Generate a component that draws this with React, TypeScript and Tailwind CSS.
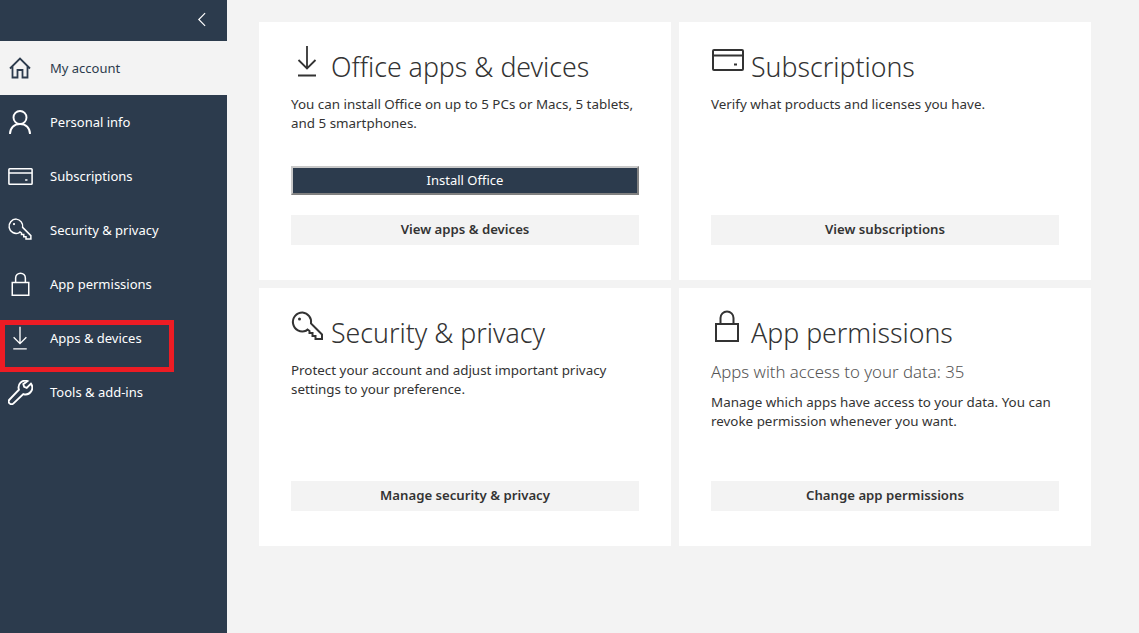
function DownloadIcon({ className }: { className?: string }) {
  return (
    <svg viewBox="0 0 20 32" fill="none" stroke="currentColor" strokeWidth="1.800" className={className}>
      <path d="M10 1v22M1.500 15l8.500 8.500 8.500-8.500M1 30.500h18" />
    </svg>
  );
}

function CardIcon({ className }: { className?: string }) {
  return (
    <svg viewBox="0 0 32 22" fill="none" stroke="currentColor" strokeWidth="2" className={className}>
      <rect x="1" y="1" width="30" height="20" rx="1" />
      <path d="M1 6.500h30M22 15.500h3" />
    </svg>
  );
}

function KeyIcon({ className }: { className?: string }) {
  return (
    <svg viewBox="0 0 32 32" fill="none" stroke="currentColor" strokeWidth="2" className={className}>
      <path d="M11 1.500a9.500 9.500 0 1 0 3.500 18.300l1.500-1.300 2 1.500v2h3v3h3v3h6.500v-4.500L19.500 12.500A9.500 9.500 0 0 0 11 1.500z" />
      <circle cx="8" cy="8" r="1.500" fill="currentColor" stroke="none" />
    </svg>
  );
}

function LockIcon({ className }: { className?: string }) {
  return (
    <svg viewBox="0 0 24 32" fill="none" stroke="currentColor" strokeWidth="2" className={className}>
      <rect x="1" y="14" width="22" height="17" />
      <path d="M5.500 14V8a6.500 6.500 0 0 1 13 0v6" />
    </svg>
  );
}

function HomeIcon({ className }: { className?: string }) {
  return (
    <svg viewBox="0 0 22 22" fill="none" stroke="currentColor" strokeWidth="1.800" className={className}>
      <path d="M1 11.500 11 1.500l10 10M3.500 9.500V20.500h5V13h5v7.500h5V9.500" />
    </svg>
  );
}

function PersonIcon({ className }: { className?: string }) {
  return (
    <svg viewBox="0 0 22 24" fill="none" stroke="currentColor" strokeWidth="1.900" className={className}>
      <circle cx="11" cy="7.500" r="6.500" />
      <path d="M1 24c0-6 4-10 10-10s10 4 10 10" />
    </svg>
  );
}

function WrenchIcon({ className }: { className?: string }) {
  return (
    <svg viewBox="0 0 24 24" fill="none" stroke="currentColor" strokeWidth="1.800" className={className}>
      <path d="M22 3.500 18 7.500l-2.500-1-.8-2.500 4-3a6.500 6.500 0 0 0-8.200 8.300L1.500 18.700a2.600 2.600 0 0 0 3.800 3.800l9.400-9a6.500 6.500 0 0 0 7.300-10z" />
    </svg>
  );
}

const navItems = [
  { label: "My account", icon: <HomeIcon className="h-[22px] w-[22px]" />, active: true },
  { label: "Personal info", icon: <PersonIcon className="h-[24px] w-[22px]" /> },
  { label: "Subscriptions", icon: <CardIcon className="h-[17px] w-[25px]" /> },
  { label: "Security & privacy", icon: <KeyIcon className="h-[24px] w-[26px]" /> },
  { label: "App permissions", icon: <LockIcon className="h-[24px] w-[19px]" /> },
  { label: "Apps & devices", icon: <DownloadIcon className="h-[24px] w-[16px]" /> },
  { label: "Tools & add-ins", icon: <WrenchIcon className="h-[25px] w-[25px]" /> },
];

function Sidebar() {
  return (
    <aside className="relative w-[227px] shrink-0 bg-[#2c3b4d] text-[13px] text-white">
      <div className="flex h-[41px] items-start justify-end pr-[21px] pt-[12px]">
        <svg viewBox="0 0 10 16" fill="none" stroke="currentColor" strokeWidth="1.300" className="h-[15px] w-[9px]">
          <path d="M9 1 2 8l7 7" />
        </svg>
      </div>
      {navItems.map((item) => (
        <div
          key={item.label}
          className={
            item.active
              ? "flex h-[54px] items-center bg-[#f3f3f3] text-[#2c3b4d]"
              : "flex h-[54px] items-center"
          }
        >
          <div className="flex w-[50px] shrink-0 justify-center pr-[10px]">{item.icon}</div>
          <span className="pt-[2px]">{item.label}</span>
        </div>
      ))}
      {/* annotation box from the screenshot */}
      <div className="absolute left-[0px] top-[320px] h-[52px] w-[174px] border-[5px] border-[#ed1c24]" />
    </aside>
  );
}

function Card({
  icon,
  title,
  subtitle,
  body,
  primary,
  action,
}: {
  icon: React.ReactNode;
  title: string;
  subtitle?: string;
  body: React.ReactNode;
  primary?: string;
  action: string;
}) {
  return (
    <section className="flex h-[258px] flex-col bg-white px-[32px] pb-[35px] pt-[22px] text-[#333]">
      <div className="flex h-[45px] items-end">
        <div className="flex w-[40px] shrink-0 items-end">{icon}</div>
        <h2 className="text-[26.700px] leading-[44px] font-light">{title}</h2>
      </div>
      {subtitle && <p className="mt-[5px] text-[16.800px] leading-[24px] font-light text-[#555]">{subtitle}</p>}
      <p className={subtitle ? "mt-[9px] text-[13.400px] leading-[19px]" : "mt-[6px] text-[13.400px] leading-[19px]"}>
        {body}
      </p>
      <div className="mt-auto flex flex-col gap-[20px]">
        {primary && (
          <button className="h-[29px] border-2 border-t-[#c8c8c8] border-r-[#808080] border-b-[#808080] border-l-[#c8c8c8] bg-[#2c3b4d] text-[13px] text-white">
            {primary}
          </button>
        )}
        <button className="h-[30px] bg-[#f3f3f3] text-[13.200px] font-semibold text-[#333]">{action}</button>
      </div>
    </section>
  );
}

export default function App() {
  return (
    <div className="flex h-[633px] w-[1139px] overflow-hidden bg-[#f3f3f3] font-['Noto_Sans','Open_Sans',sans-serif]">
      <Sidebar />
      <main className="grid grid-cols-[412px_412px] content-start gap-[8px] pl-[32px] pt-[22px]">
        <Card
          icon={<DownloadIcon className="mb-[12px] ml-[5px] h-[32px] w-[22px]" />}
          title="Office apps & devices"
          body="You can install Office on up to 5 PCs or Macs, 5 tablets, and 5 smartphones."
          primary="Install Office"
          action="View apps & devices"
        />
        <Card
          icon={<CardIcon className="mb-[18px] ml-[1px] h-[22px] w-[32px]" />}
          title="Subscriptions"
          body="Verify what products and licenses you have."
          action="View subscriptions"
        />
        <Card
          icon={<KeyIcon className="mb-[12px] h-[32px] w-[33px]" />}
          title="Security & privacy"
          body="Protect your account and adjust important privacy settings to your preference."
          action="Manage security & privacy"
        />
        <Card
          icon={<LockIcon className="mb-[13px] ml-[4px] h-[32px] w-[24px]" />}
          title="App permissions"
          subtitle="Apps with access to your data: 35"
          body="Manage which apps have access to your data. You can revoke permission whenever you want."
          action="Change app permissions"
        />
      </main>
    </div>
  );
}
